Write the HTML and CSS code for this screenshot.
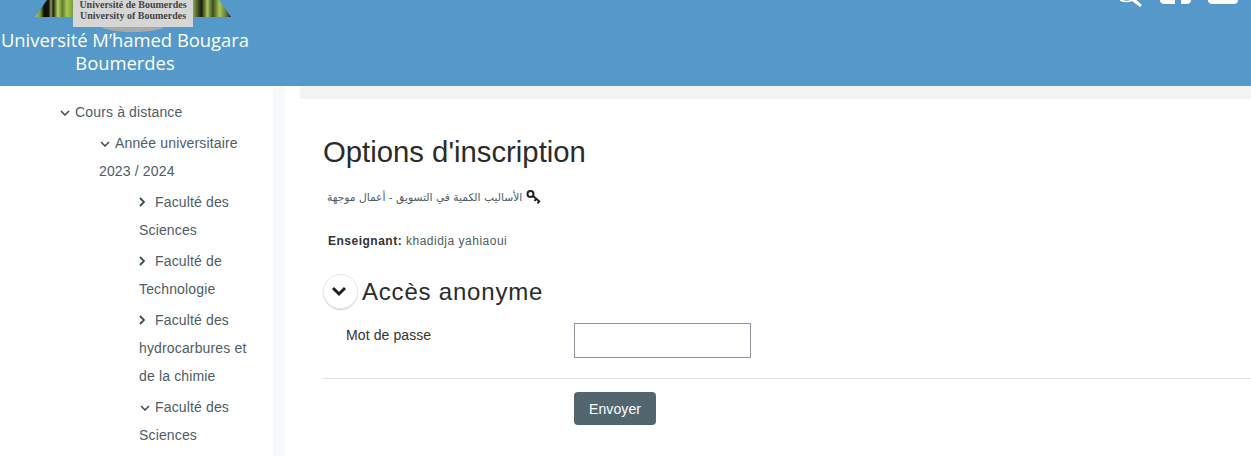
FILE: index.html
```html
<!DOCTYPE html>
<html lang="fr">
<head>
  <meta charset="UTF-8">
  <meta name="viewport" content="width=device-width, initial-scale=1.0">
  <title>Options d'inscription</title>
  <link rel="stylesheet" href="styles.css">
</head>
<body>
  <header class="topbar">
    <div class="logo">
      <svg class="crest" width="250" height="32" viewBox="0 0 250 32">
        <defs>
          <linearGradient id="bandLeft" x1="0" x2="1" y1="0" y2="0">
            <stop offset="0" stop-color="#a4c45a"/>
            <stop offset=".14" stop-color="#7d9a3c"/>
            <stop offset=".24" stop-color="#0c0d08"/>
            <stop offset=".36" stop-color="#14150c"/>
            <stop offset=".42" stop-color="#8a9c58"/>
            <stop offset=".48" stop-color="#20220f"/>
            <stop offset=".6" stop-color="#b6d368"/>
            <stop offset=".72" stop-color="#5f7a2a"/>
            <stop offset=".84" stop-color="#a9c95a"/>
            <stop offset="1" stop-color="#7d9a3c"/>
          </linearGradient>
          <linearGradient id="bandRight" x1="1" x2="0" y1="0" y2="0">
            <stop offset="0" stop-color="#10130c"/>
            <stop offset=".12" stop-color="#5d7330"/>
            <stop offset=".3" stop-color="#a9c95a"/>
            <stop offset=".48" stop-color="#3c4a1c"/>
            <stop offset=".62" stop-color="#a8c65c"/>
            <stop offset=".78" stop-color="#1a1c0e"/>
            <stop offset="1" stop-color="#8aa544"/>
          </linearGradient>
        </defs>
        <polygon points="35,17 47,0 73,0 73,17" fill="url(#bandLeft)"/>
        <polygon points="193,17 193,0 219,0 231,17" fill="url(#bandRight)"/>
        <ellipse cx="133" cy="25" rx="33" ry="7" fill="#a9a9a9"/>
        <rect x="73" y="-2" width="120" height="29" fill="#d6d6d6"/>
        <text class="crest-text" x="133" y="8" text-anchor="middle">Université de Boumerdes</text>
        <text class="crest-text" x="133" y="19" text-anchor="middle">University of Boumerdes</text>
      </svg>
      <div class="logo-name">Université M’hamed Bougara<br>Boumerdes</div>
    </div>
    <div class="topicons">
      <svg width="23" height="7" viewBox="1 0 23 7"><path d="M1 -1.500Q8 3 14 -1.500L15 -2L23 5L21 7L13 1Q8 3.500 1 1Z" fill="#fff"/></svg>
      <svg width="31" height="5" viewBox="0 0 31 5"><path d="M0 0H15V4H4Q1 4 0 1ZM21 0H31V1Q30 4 27 4H21Z" fill="#fff"/></svg>
      <svg width="30" height="5" viewBox="0 0 30 5"><path d="M0 0H30V1Q29 4 26 4H4Q1 4 0 1Z" fill="#fff"/></svg>
    </div>
  </header>

  <div class="page">
    <nav class="sidebar">
      <ul class="tree">
        <li>
          <a class="node"><svg class="chev" width="10" height="6" viewBox="0 0 10 6"><path d="M1 1l4 4 4-4"/></svg>Cours à distance</a>
          <ul class="tree">
            <li>
              <a class="node"><svg class="chev" width="10" height="6" viewBox="0 0 10 6"><path d="M1 1l4 4 4-4"/></svg>Année universitaire 2023 / 2024</a>
              <ul class="tree">
                <li><a class="node"><svg class="chev closed" width="6" height="10" viewBox="0 0 6 10"><path d="M1 1l4 4-4 4"/></svg>Faculté des Sciences</a></li>
                <li><a class="node"><svg class="chev closed" width="6" height="10" viewBox="0 0 6 10"><path d="M1 1l4 4-4 4"/></svg>Faculté de Technologie</a></li>
                <li><a class="node"><svg class="chev closed" width="6" height="10" viewBox="0 0 6 10"><path d="M1 1l4 4-4 4"/></svg>Faculté des hydrocarbures et de la chimie</a></li>
                <li><a class="node"><svg class="chev" width="10" height="6" viewBox="0 0 10 6"><path d="M1 1l4 4 4-4"/></svg>Faculté des Sciences</a></li>
              </ul>
            </li>
          </ul>
        </li>
      </ul>
    </nav>
    <div class="strip"></div>

    <main class="content">
      <div class="breadcrumb"></div>
      <h1>Options d'inscription</h1>
      <div class="course-name">
        <span dir="rtl" lang="ar">الأساليب الكمية في التسويق - أعمال موجهة</span>
        <svg width="16" height="16" viewBox="0 0 16 16"><circle cx="4.500" cy="5" r="3" fill="none" stroke="#222" stroke-width="2"/><path d="M7 7l7 6M10 10l-1.500 2M13 12.500l-1.500 2" fill="none" stroke="#222" stroke-width="2"/></svg>
      </div>
      <p class="teacher"><strong>Enseignant:</strong> khadidja yahiaoui</p>

      <div class="section-head">
        <span class="toggle"><svg width="16" height="11" viewBox="0 0 16 11"><path d="M2 2l6 6 6-6" fill="none" stroke="#1d2125" stroke-width="3"/></svg></span>
        <h2>Accès anonyme</h2>
      </div>
      <form class="enrol">
        <div class="field">
          <label for="pass">Mot de passe</label>
          <input id="pass" type="password">
        </div>
        <hr>
        <div class="actions">
          <button type="button">Envoyer</button>
        </div>
      </form>
    </main>
  </div>
</body>
</html>
```

FILE: styles.css
```css
body {
  margin: 0;
  font-family: "Liberation Sans", Arial, sans-serif;
  font-size: 14px;
  color: #1d2125;
  background: #fff;
  overflow: hidden;
}
.topbar {
  height: 86px;
  background: #5499c9;
  display: flex;
  justify-content: space-between;
  overflow: hidden;
}
.logo {
  width: 250px;
}
.crest {
  display: block;
}
.crest-text {
  font-family: "Liberation Serif", serif;
  font-size: 10px;
  font-weight: bold;
  fill: #444;
}
.logo-name {
  font-family: "Open Sans", sans-serif;
  font-size: 18.4px;
  font-weight: 500;
  line-height: 23px;
  color: #fff;
  text-align: center;
  white-space: nowrap;
  margin-top: -4px;
}
.topicons {
  display: flex;
  align-items: flex-start;
  gap: 17px;
  padding-right: 13px;
}
.page {
  display: flex;
}
.sidebar {
  width: 273px;
  flex: none;
  padding-top: 12px;
  box-sizing: border-box;
  height: 370px;
  overflow: hidden;
}
.strip {
  width: 12px;
  flex: none;
  background: #f8f9fa;
}
.tree {
  list-style: none;
  margin: 0;
  padding: 0 22px 0 40px;
}
.sidebar > .tree {
  padding-left: 59px;
}
.tree .tree {
  padding-right: 0;
  margin-top: 3px;
}
.tree li {
  margin-bottom: 3px;
}
.node {
  display: block;
  line-height: 28px;
  color: #4d5d66;
  letter-spacing: .15px;
}
.chev {
  fill: none;
  stroke: #3c4a52;
  stroke-width: 1.500;
  margin: 0 5px 1px 1px;
}
.chev.closed {
  margin: 0 10px 0 0;
  stroke-width: 1.800;
}
.content {
  flex: 1;
  min-width: 0;
  padding-left: 15px;
}
.breadcrumb {
  height: 13px;
  background: #f3f3f3;
}
h1 {
  margin: 33px 0 0 23px;
  font-size: 29.3px;
  font-weight: normal;
  line-height: 40px;
  color: #2b2b2b;
}
.course-name {
  display: flex;
  align-items: center;
  gap: 4px;
  margin: 14px 0 0 27px;
  height: 22px;
  font-family: "DejaVu Sans", sans-serif;
  font-size: 10.7px;
  color: #4d5d66;
}
.teacher {
  margin: 23px 0 0 28px;
  font-size: 12px;
  line-height: 20px;
  letter-spacing: .5px;
  color: #4d5d66;
}
.teacher strong {
  color: #333;
}
.section-head {
  display: flex;
  align-items: center;
  gap: 4px;
  margin: 23px 0 0 23px;
}
.toggle {
  width: 35px;
  height: 35px;
  box-sizing: border-box;
  display: flex;
  align-items: center;
  justify-content: center;
  padding-right: 3px;
  border-radius: 50%;
  border: 1px solid #e6e6e6;
  box-shadow: 0 1px 1px rgba(0,0,0,.2);
}
h2 {
  margin: 0;
  font-size: 24px;
  font-weight: normal;
  letter-spacing: .8px;
  color: #2b2b2b;
}
.enrol {
  margin: 14px 0 0 23px;
}
.field {
  display: flex;
  align-items: flex-start;
  padding-left: 23px;
}
.field label {
  width: 228px;
  line-height: 24px;
  letter-spacing: .1px;
  color: #333;
}
.field input {
  width: 177px;
  height: 35px;
  box-sizing: border-box;
  border: 1px solid #8f959e;
  padding: 6px 12px;
  background: #fff;
}
hr {
  border: 0;
  border-top: 1px solid #dee2e6;
  margin: 20px 0 13px;
}
.actions {
  padding-left: 251px;
}
button {
  width: 82px;
  height: 33px;
  border: 0;
  border-radius: 4px;
  background: #51666f;
  color: #fff;
  font-family: inherit;
  font-size: 14px;
  letter-spacing: .1px;
}
```
